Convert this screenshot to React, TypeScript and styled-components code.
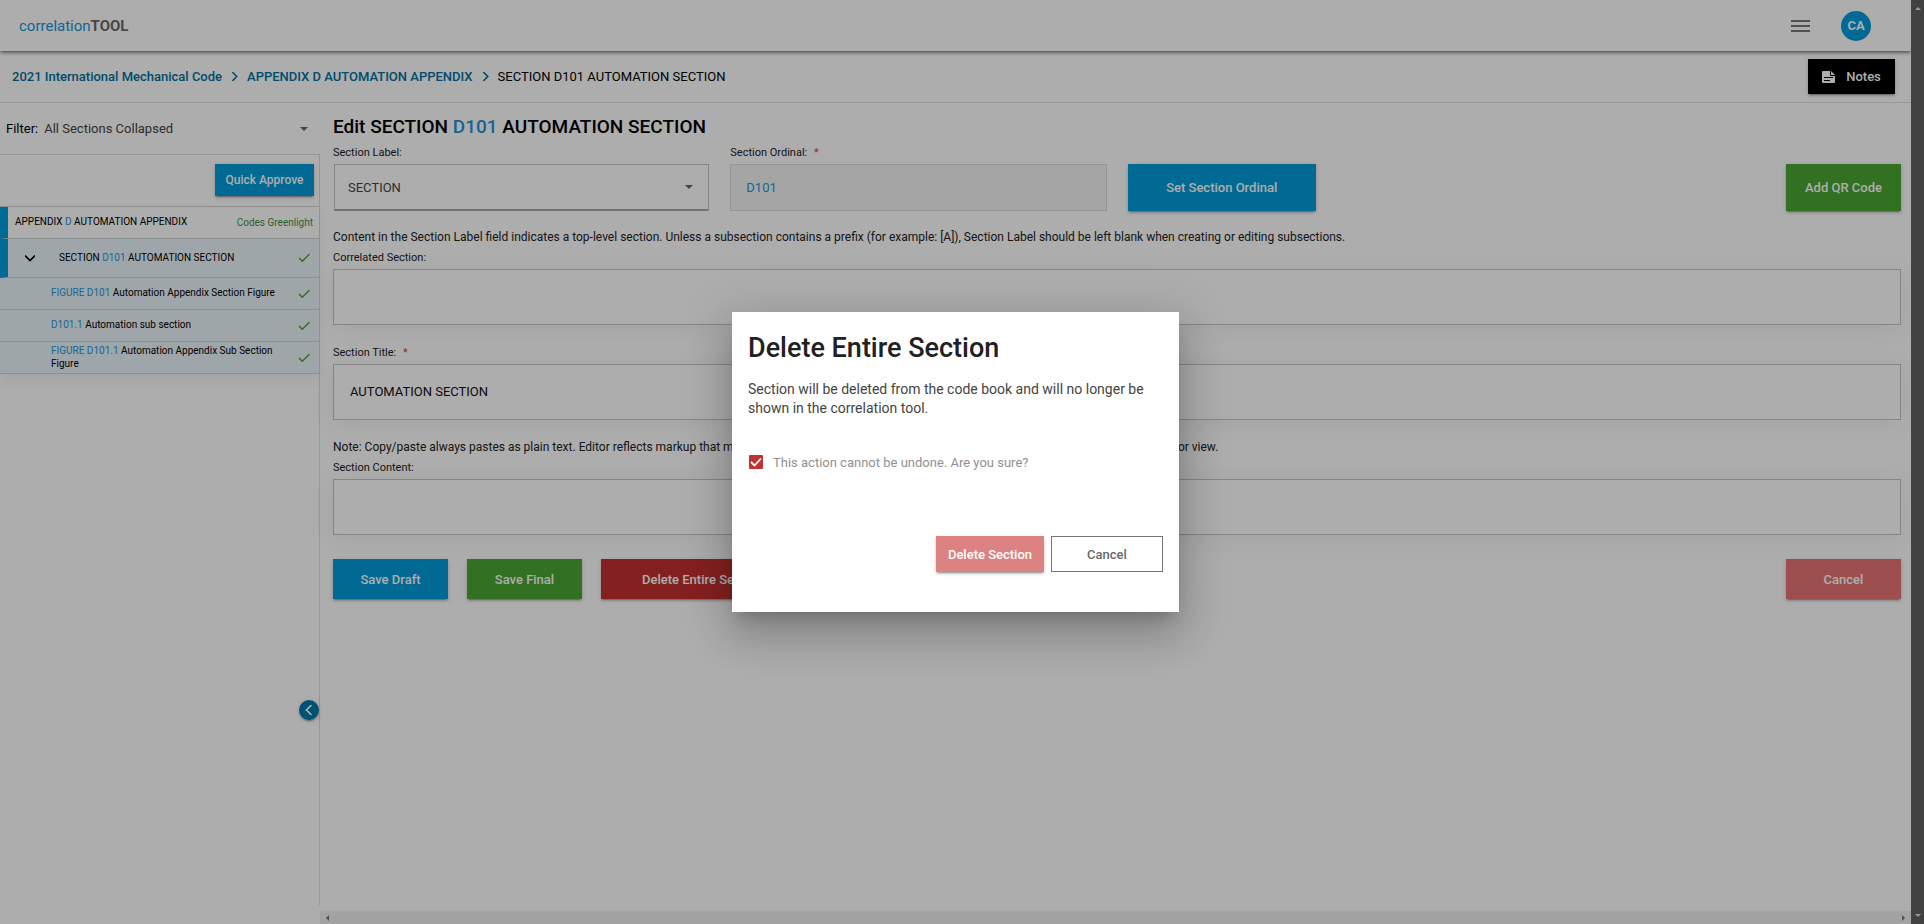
import React from "react";
import styled, { createGlobalStyle, css } from "styled-components";

const GlobalStyle = createGlobalStyle`
  *, *::before, *::after { box-sizing: border-box; }
  body {
    margin: 0;
    background: #fff;
    color: #000;
    font-family: Roboto, "Liberation Sans", sans-serif;
    font-size: 13px;
  }
  button, input, select, textarea { font: inherit; }
  h1, h2, p, ul, ol { margin: 0; padding: 0; }
  ul, ol { list-style: none; }
`;

const tones = {
  blue: "#009bdb",
  green: "#49a731",
  red: "#c53030",
  rose: "#e87474",
  black: "#000",
};
type Tone = keyof typeof tones;

const buttonShadow = "0 3px 1px -2px rgba(0,0,0,.2), 0 2px 2px rgba(0,0,0,.14), 0 1px 5px rgba(0,0,0,.12)";

const Window = styled.div`
  display: flex;
  min-height: 100vh;
`;

const Viewport = styled.div`
  position: relative;
  display: flex;
  flex-direction: column;
  flex: 1;
  min-width: 0;
  overflow: hidden;
`;

const PageScrollbar = styled.div`
  display: flex;
  flex-direction: column;
  justify-content: space-between;
  align-items: center;
  width: 13px;
  padding: 5px 0;
  background: #424242;
`;

const TopBar = styled.header`
  position: relative;
  display: flex;
  align-items: center;
  height: 51px;
  padding: 0 40px 0 19px;
  box-shadow: 0 2px 4px -1px rgba(0,0,0,.4), 0 1px 4px rgba(0,0,0,.4);
`;

const Logo = styled.a`
  flex: 1;
  color: #1597d4;
  font-size: 15px;
  text-decoration: none;
  strong { color: #6a6a6a; font-weight: 700; }
`;

const MenuButton = styled.button`
  display: flex;
  padding: 0;
  margin-right: 31px;
  border: 0;
  background: none;
  color: #757575;
`;

const Avatar = styled.button`
  width: 30px;
  height: 30px;
  padding: 0;
  border: 0;
  border-radius: 50%;
  background: ${tones.blue};
  color: #fff;
  font-weight: 700;
`;

const CrumbBar = styled.nav`
  display: flex;
  align-items: center;
  height: 52px;
  padding: 0 16px 0 12px;
  border-bottom: 1px solid #e0e0e0;
`;

const Crumbs = styled.ol`
  display: flex;
  align-items: center;
  flex: 1;
  li { display: flex; align-items: center; }
  a { color: #00719f; font-weight: 500; text-decoration: none; }
  svg { margin: 0 8px; color: #00719f; }
`;

const Button = styled.button<{ $tone: Tone; $size?: "small" | "tall" | "wide" }>`
  display: inline-flex;
  align-items: center;
  justify-content: center;
  height: 40px;
  min-width: 115px;
  padding: 0 13px;
  border: 0;
  background: ${({ $tone }) => tones[$tone]};
  box-shadow: ${buttonShadow};
  color: #fff;
  font-weight: 500;
  white-space: nowrap;
  ${({ $size }) => $size === "small" && css`height: 32px; min-width: 99px; padding: 0 10px; font-size: 12px;`}
  ${({ $size }) => $size === "tall" && css`height: 47px;`}
  ${({ $size }) => $size === "wide" && css`padding: 0 41px;`}
`;

const NotesButton = styled(Button)`
  gap: 10px;
  height: 35px;
  min-width: 87px;
`;

const Body = styled.div`
  display: flex;
  flex: 1;
`;

const Sidebar = styled.aside`
  position: relative;
  display: flex;
  flex-direction: column;
  width: 320px;
  padding-bottom: 19px;
`;

const FilterRow = styled.label`
  display: flex;
  align-items: center;
  gap: 6px;
  height: 51px;
  padding: 0 12px 0 6px;
`;

const SelectWrap = styled.span`
  display: flex;
  align-items: center;
  flex: 1;
  svg { margin-left: -12px; pointer-events: none; color: #666; }
`;

const Select = styled.select`
  flex: 1;
  min-width: 0;
  padding: 0;
  border: 0;
  appearance: none;
  background: none;
  color: #444;
`;

const Tree = styled.div`
  flex: 1;
  border-top: 1px solid #dcdcdc;
  border-right: 1px solid #dcdcdc;
`;

const TreeTools = styled.div`
  display: flex;
  justify-content: flex-end;
  padding: 9px 5px 10px;
  border-bottom: 1px solid #d4d4d4;
`;

const TreeList = styled.ul`
  box-shadow: 0 6px 12px rgba(0,0,0,.06);
`;

const TreeRow = styled.li<{ $level: 0 | 1 | 2; $marked?: boolean }>`
  display: flex;
  align-items: center;
  min-height: ${({ $level }) => ($level === 1 ? 39 : 32)}px;
  padding: 0 ${({ $level }) => ($level === 0 ? 6 : 8)}px 0 ${({ $level }) => [7, 17, 51][$level]}px;
  border-bottom: 1px solid #d0d4d6;
  background: ${({ $level }) => ($level === 0 ? "#fff" : "#ebf5f9")};
  font-size: 10px;
  line-height: 13px;
  ${({ $marked }) => $marked && css`border-left: 8px solid ${tones.blue};`}
  > svg { flex: none; }
`;

const RowText = styled.a<{ $indent?: boolean }>`
  flex: 1;
  margin-left: ${({ $indent }) => ($indent ? 24 : 0)}px;
  padding: 0 8px 2px 0;
  color: inherit;
  text-decoration: none;
`;

const Num = styled.span`
  color: #1d96dc;
`;

const Status = styled.span`
  color: #3f9142;
`;

const IconButton = styled.button`
  display: flex;
  padding: 0;
  border: 0;
  background: none;
`;

const CollapseButton = styled.button`
  position: absolute;
  right: 1px;
  bottom: 204px;
  display: flex;
  align-items: center;
  justify-content: center;
  width: 20px;
  height: 20px;
  padding: 0;
  border: 0;
  border-radius: 50%;
  background: #007aab;
  color: #fff;
  box-shadow: ${buttonShadow};
`;

const Main = styled.main`
  display: flex;
  flex-direction: column;
  flex: 1;
  min-width: 0;
`;

const Editor = styled.form`
  flex: 1;
  padding: 13px 10px 0 13px;
`;

const Heading = styled.h1`
  margin-bottom: 7px;
  font-size: 19px;
  font-weight: 500;
  line-height: 21px;
`;

const Hint = styled.p`
  margin-bottom: 4px;
  color: #222;
  font-size: 12px;
  line-height: 16px;
`;

const Label = styled.label`
  display: block;
  margin-bottom: 2px;
  color: #222;
  font-size: 11px;
  line-height: 18px;
  span { margin-left: 4px; color: #d9453d; }
`;

const TopFields = styled.div`
  display: grid;
  grid-template-columns: 24% 24% 12% 1fr;
  column-gap: 21px;
  align-items: end;
  margin-bottom: 18px;
`;

const RightCell = styled.div`
  display: flex;
  justify-content: flex-end;
`;

const LabelSelect = styled(SelectWrap)`
  height: 47px;
  margin-left: 1px;
  padding: 0 15px 0 13px;
  border: 1px solid #c4c4c4;
  border-bottom: 2px solid #aaa;
`;

const fieldStyle = css`
  display: block;
  width: 100%;
  border: 1px solid #c4c4c4;
  border-radius: 0;
  outline: 0;
  color: #111;
`;

const OrdinalInput = styled.input`
  ${fieldStyle}
  height: 47px;
  padding: 0 15px;
  border-color: #dcdcdc;
  background: #f4f4f4;
  color: #1d96dc;
`;

const TextField = styled.textarea`
  ${fieldStyle}
  height: 56px;
  margin-bottom: 19px;
  padding: 18px 16px;
  line-height: 18px;
  resize: none;
  box-shadow: 0 4px 24px rgba(0,0,0,.06);
`;

const Actions = styled.div`
  display: flex;
  gap: 19px;
  padding-top: 5px;
  > :last-child { margin-left: auto; }
`;

const SideScrollbar = styled.div`
  display: flex;
  align-items: center;
  justify-content: space-between;
  height: 13px;
  padding: 0 5px;
  background: #f1f1f1;
`;

const Backdrop = styled.div`
  position: absolute;
  inset: 0;
  display: flex;
  align-items: center;
  justify-content: center;
  background: rgba(0,0,0,.32);
`;

const Dialog = styled.section`
  display: flex;
  flex-direction: column;
  width: 447px;
  min-height: 300px;
  padding: 16px;
  background: #fff;
  box-shadow: 0 11px 15px -7px rgba(0,0,0,.2), 0 24px 38px 3px rgba(0,0,0,.14), 0 9px 46px 8px rgba(0,0,0,.12);
  h2 { color: #212121; font-size: 27px; font-weight: 500; line-height: 40px; }
  p { margin: 12px 0 36px; color: #444; font-size: 14px; line-height: 19px; }
`;

const Confirm = styled.label`
  display: flex;
  align-items: center;
  gap: 9px;
  color: #919191;
`;

const CheckBoxWrap = styled.span`
  display: grid;
  width: 16px;
  height: 16px;
  > * { grid-area: 1 / 1; }
  svg { pointer-events: none; }
`;

const CheckBox = styled.input`
  width: 14px;
  height: 14px;
  margin: 1px;
  appearance: none;
  border-radius: 1px;
  background: ${tones.red};
`;

const DialogActions = styled.div`
  display: flex;
  justify-content: flex-end;
  gap: 7px;
  margin-top: auto;
  padding-bottom: 24px;
`;

const DialogButton = styled.button<{ $primary?: boolean }>`
  height: 36px;
  min-width: ${({ $primary }) => ($primary ? 108 : 112)}px;
  padding: 0;
  border: ${({ $primary }) => ($primary ? "0" : "1px solid #757575")};
  background: ${({ $primary }) => ($primary ? "#dc8282" : "#fff")};
  color: ${({ $primary }) => ($primary ? "#fff" : "#6a6a6a")};
  font-weight: 500;
  box-shadow: ${({ $primary }) => ($primary ? buttonShadow : "none")};
`;

const Caret = () => (
  <svg width="8" height="4" viewBox="0 0 8 4" aria-hidden="true"><path d="M0 0h8L4 4z" fill="currentColor" /></svg>
);

const Chevron = ({ turn = 0, size = 8 }: { turn?: number; size?: number }) => (
  <svg width={size} height={size} viewBox="0 0 8 8" aria-hidden="true">
    <path d="M2 0l4 4-4 4" transform={`rotate(${turn} 4 4)`} fill="none" stroke="currentColor" strokeWidth="1.4" />
  </svg>
);

const Tick = () => (
  <svg width="14" height="14" viewBox="0 0 14 14" aria-label="Approved">
    <path d="M2 7l3.3 3.3L12.5 3" fill="none" stroke="#4a9e3c" strokeWidth="1.4" />
  </svg>
);

const Arrow = ({ d, color }: { d: string; color: string }) => (
  <svg width="6" height="6" viewBox="0 0 6 6" aria-hidden="true"><path d={d} fill={color} /></svg>
);

export default function App() {
  return (
    <>
      <GlobalStyle />
      <Window>
        <Viewport>
          <TopBar>
            <Logo href="#">correlation<strong>TOOL</strong></Logo>
            <MenuButton aria-label="Menu">
              <svg width="19" height="14" viewBox="0 0 19 14"><path d="M0 2h19M0 7h19M0 12h19" stroke="currentColor" strokeWidth="2" /></svg>
            </MenuButton>
            <Avatar>CA</Avatar>
          </TopBar>
          <CrumbBar>
            <Crumbs>
              <li><a href="#">2021 International Mechanical Code</a><Chevron size={9} /></li>
              <li><a href="#">APPENDIX D AUTOMATION APPENDIX</a><Chevron size={9} /></li>
              <li>SECTION D101 AUTOMATION SECTION</li>
            </Crumbs>
            <NotesButton $tone="black">
              <svg width="14" height="12" viewBox="0 0 14 12" aria-hidden="true">
                <path d="M1 0h8l4 4v7a1 1 0 0 1-1 1H1a1 1 0 0 1-1-1V1a1 1 0 0 1 1-1z" fill="#fff" />
                <path d="M8.5 0v4.5H13M2 6.5h9M2 9.5h6" fill="none" stroke="#000" />
              </svg>
              Notes
            </NotesButton>
          </CrumbBar>
          <Body>
            <Sidebar>
              <FilterRow>
                Filter:
                <SelectWrap><Select><option>All Sections Collapsed</option></Select><Caret /></SelectWrap>
              </FilterRow>
              <Tree>
                <TreeTools><Button $tone="blue" $size="small">Quick Approve</Button></TreeTools>
                <TreeList>
                  <TreeRow $level={0} $marked>
                    <RowText href="#">APPENDIX <Num>D</Num> AUTOMATION APPENDIX</RowText>
                    <Status>Codes Greenlight</Status>
                  </TreeRow>
                  <TreeRow $level={1} $marked>
                    <IconButton aria-label="Collapse section"><Chevron turn={90} size={10} /></IconButton>
                    <RowText href="#" $indent>SECTION <Num>D101</Num> AUTOMATION SECTION</RowText><Tick />
                  </TreeRow>
                  <TreeRow $level={2}><RowText href="#"><Num>FIGURE D101</Num> Automation Appendix Section Figure</RowText><Tick /></TreeRow>
                  <TreeRow $level={2}><RowText href="#"><Num>D101.1</Num> Automation sub section</RowText><Tick /></TreeRow>
                  <TreeRow $level={2}><RowText href="#"><Num>FIGURE D101.1</Num> Automation Appendix Sub Section Figure</RowText><Tick /></TreeRow>
                </TreeList>
              </Tree>
              <CollapseButton aria-label="Collapse sidebar"><Chevron turn={180} size={10} /></CollapseButton>
            </Sidebar>
            <Main>
              <Editor>
                <Heading>Edit SECTION <Num>D101</Num> AUTOMATION SECTION</Heading>
                <TopFields>
                  <div>
                    <Label htmlFor="label">Section Label:</Label>
                    <LabelSelect><Select id="label"><option>SECTION</option></Select><Caret /></LabelSelect>
                  </div>
                  <div>
                    <Label htmlFor="ordinal">Section Ordinal: <span>*</span></Label>
                    <OrdinalInput id="ordinal" defaultValue="D101" readOnly />
                  </div>
                  <Button type="button" $tone="blue" $size="tall">Set Section Ordinal</Button>
                  <RightCell><Button type="button" $tone="green" $size="tall">Add QR Code</Button></RightCell>
                </TopFields>
                <Hint>Content in the Section Label field indicates a top-level section. Unless a subsection contains a prefix (for example: [A]), Section Label should be left blank when creating or editing subsections.</Hint>
                <Label htmlFor="correlated">Correlated Section:</Label>
                <TextField id="correlated" />
                <Label htmlFor="title">Section Title: <span>*</span></Label>
                <TextField id="title" defaultValue="AUTOMATION SECTION" />
                <Hint>Note: Copy/paste always pastes as plain text. Editor reflects markup that may not be visible in the published book, and some styles will look different in the editor view.</Hint>
                <Label htmlFor="content">Section Content:</Label>
                <TextField id="content" />
                <Actions>
                  <Button type="button" $tone="blue">Save Draft</Button>
                  <Button type="button" $tone="green">Save Final</Button>
                  <Button type="button" $tone="red" $size="wide">Delete Entire Section</Button>
                  <Button type="button" $tone="rose">Cancel</Button>
                </Actions>
              </Editor>
              <SideScrollbar aria-hidden="true">
                <Arrow d="M4 0v6L1 3z" color="#777" />
                <Arrow d="M2 0v6l3-3z" color="#777" />
              </SideScrollbar>
            </Main>
          </Body>
          <Backdrop>
            <Dialog role="dialog" aria-modal="true" aria-labelledby="dialog-title">
              <h2 id="dialog-title">Delete Entire Section</h2>
              <p>Section will be deleted from the code book and will no longer be shown in the correlation tool.</p>
              <Confirm>
                <CheckBoxWrap>
                  <CheckBox type="checkbox" defaultChecked />
                  <svg width="16" height="16" viewBox="0 0 16 16" aria-hidden="true"><path d="M3 8l3.5 3.5L13 4.5" fill="none" stroke="#fff" strokeWidth="1.8" /></svg>
                </CheckBoxWrap>
                This action cannot be undone. Are you sure?
              </Confirm>
              <DialogActions>
                <DialogButton $primary>Delete Section</DialogButton>
                <DialogButton>Cancel</DialogButton>
              </DialogActions>
            </Dialog>
          </Backdrop>
        </Viewport>
        <PageScrollbar aria-hidden="true">
          <Arrow d="M0 5h6L3 2z" color="#9a9a9a" />
          <Arrow d="M0 1h6L3 4z" color="#9a9a9a" />
        </PageScrollbar>
      </Window>
    </>
  );
}
